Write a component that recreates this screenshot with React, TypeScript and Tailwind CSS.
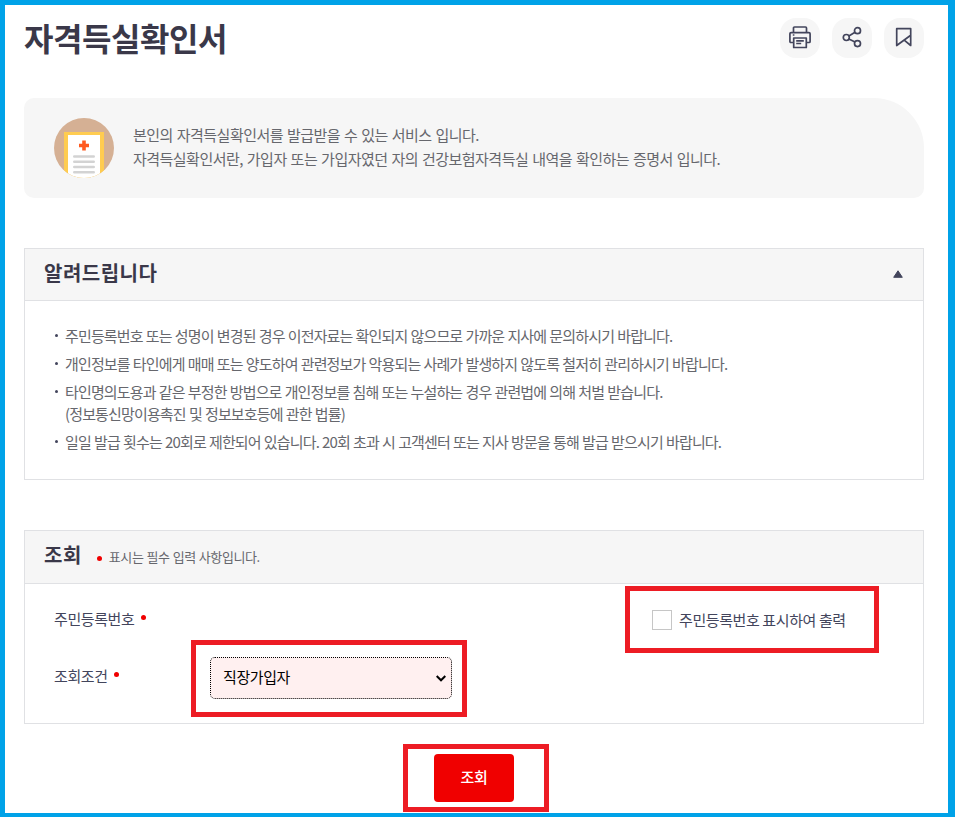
import type { ReactNode } from "react";

const notices = [
  "주민등록번호 또는 성명이 변경된 경우 이전자료는 확인되지 않으므로 가까운 지사에 문의하시기 바랍니다.",
  "개인정보를 타인에게 매매 또는 양도하여 관련정보가 악용되는 사례가 발생하지 않도록 철저히 관리하시기 바랍니다.",
  "타인명의도용과 같은 부정한 방법으로 개인정보를 침해 또는 누설하는 경우 관련법에 의해 처벌 받습니다.\n(정보통신망이용촉진 및 정보보호등에 관한 법률)",
  "일일 발급 횟수는 20회로 제한되어 있습니다. 20회 초과 시 고객센터 또는 지사 방문을 통해 발급 받으시기 바랍니다.",
];

const IconButton = ({ label, children }: { label: string; children: ReactNode }) => (
  <button
    aria-label={label}
    className="flex size-10 items-start justify-center rounded-[16px] bg-[#f6f6f6] pt-[7px]"
  >
    <svg
      width="24"
      height="24"
      viewBox="0 0 24 24"
      fill="none"
      stroke="#43455c"
      strokeWidth="1.7"
      strokeLinejoin="round"
    >
      {children}
    </svg>
  </button>
);

const Required = () => <span className="mb-1 size-[5px] rounded-full bg-[#f00000]" />;

const DocumentIcon = () => (
  <svg width="60" height="60" viewBox="0 0 60 60">
    <clipPath id="circle">
      <circle cx="30" cy="30" r="30" />
    </clipPath>
    <g clipPath="url(#circle)">
      <rect width="60" height="60" fill="#d5b094" />
      <rect x="10" y="14" width="40" height="46" fill="#ffcc50" />
      <rect x="14" y="17" width="32" height="43" fill="#fff" />
      <path d="M30 22.5v10M25 27.5h10" stroke="#ff5a1f" strokeWidth="3.6" />
      <path
        d="M20.3 38.5h19.4M20.3 43.7h19.4M20.3 49h19.4M20.3 54.2h19.4"
        stroke="#d3d3d3"
        strokeWidth="2.6"
        strokeLinecap="round"
      />
    </g>
  </svg>
);

const App = () => {
  return (
    <div className="h-[817px] w-[955px] overflow-hidden border-t-[5px] border-r-[7px] border-b-4 border-l-[5px] border-[#00a2e8] bg-white pr-6 pl-[19px] font-['Noto_Sans_CJK_KR','Noto_Sans',sans-serif] text-[#43455c]">
      <header className="flex h-[93px] items-start justify-between pt-[13px]">
        <h1 className="text-[32px] leading-[38px] font-bold tracking-[-0.45px] text-[#3a3849]">
          자격득실확인서
        </h1>
        <div className="flex gap-3">
          <IconButton label="인쇄">
            <path d="M5.500 7.400V3q0-1 1-1h11q1 0 1 1v4.400M5.500 17.500H2.900q-1 0-1-1V8.800q0-1.200 1.200-1.200h17.800q1.200 0 1.200 1.200v7.700q0 1-1 1H18.500M5.700 13h12.600v9.500H5.700zM4.800 10h1.600M8.200 15.800h7.600M8.200 18.500h5" />
          </IconButton>
          <IconButton label="공유">
            <circle cx="6.300" cy="12.500" r="3" />
            <circle cx="17.500" cy="5.700" r="3" />
            <circle cx="17.500" cy="18.600" r="3" />
            <path d="m8.900 10.900 6.100-3.600M8.900 14.100l6.100 3" />
          </IconButton>
          <IconButton label="북마크">
            <path d="M18.700 10.300 4.700 20.500V3.700h14v16.800L12.200 15.200" />
          </IconButton>
        </div>
      </header>

      <section className="flex h-[100px] items-center gap-[19px] rounded-[10px] rounded-tr-[50px] bg-[#f6f6f6] pl-[30px]">
        <DocumentIcon />
        <p className="pb-0.5 text-[15px] leading-6 tracking-[-0.52px] whitespace-nowrap text-[#66676d] [word-spacing:1.1px]">
          본인의 자격득실확인서를 발급받을 수 있는 서비스 입니다.
          <br />
          자격득실확인서란, 가입자 또는 가입자였던 자의 건강보험자격득실 내역을 확인하는 증명서 입니다.
        </p>
      </section>

      <section className="mt-[50px] h-[232px] border border-[#e0e1e4]">
        <div className="flex h-[52px] items-center justify-between border-b border-[#e0e1e4] bg-[#f6f6f6] pr-5 pb-[3px] pl-[19px]">
          <h2 className="text-[20px] font-bold tracking-[0.5px] text-[#3a3849]">알려드립니다</h2>
          <svg width="10" height="8" viewBox="0 0 10 8" className="mt-0.5">
            <path d="M5 .8 9.300 7.300H.7z" fill="#43455c" stroke="#43455c" strokeLinejoin="round" />
          </svg>
        </div>
        <ul className="flex flex-col gap-1.5 pt-6 pl-[30px] text-[15px] leading-[22px] tracking-[-0.85px] whitespace-pre text-[#66676d] [word-spacing:0.6px]">
          {notices.map((notice) => (
            <li key={notice} className="flex gap-[7px]">
              <span className="mt-[9px] size-[3px] shrink-0 rounded-full bg-[#43455c]" />
              {notice}
            </li>
          ))}
        </ul>
      </section>

      <section className="mt-[50px] h-[194px] border border-[#e0e1e4]">
        <div className="flex h-[53px] items-center border-b border-[#e0e1e4] bg-[#f6f6f6] pb-1 pl-[19px]">
          <h2 className="mr-[15px] text-[20px] font-bold tracking-[0.5px] text-[#3a3849]">조회</h2>
          <span className="flex items-center gap-[7px] pt-1">
            <span className="mt-0.5 size-[5px] rounded-full bg-[#f00000]" />
            <span className="text-[13px] leading-5 tracking-[-0.4px] text-[#66676d] [word-spacing:0.5px]">
              표시는 필수 입력 사항입니다.
            </span>
          </span>
        </div>
        <div className="flex h-[72px] items-center text-[15px] tracking-[-0.4px]">
          <div className="flex w-[597px] items-center gap-[7px] pb-0.5 pl-[29px]">
            주민등록번호 <Required />
          </div>
          <div className="relative flex h-[67px] w-[254px] items-center pl-[30px]">
            <span className="absolute -top-px left-[3px] h-[67px] w-[254px] border-[5px] border-[#ed1c24]" />
            <label className="flex items-center gap-[7px]">
              <input
                type="checkbox"
                className="size-5 appearance-none border border-[#c6c6c6] bg-white"
              />
              주민등록번호 표시하여 출력
            </label>
          </div>
        </div>
        <div className="mt-px flex h-[42px] items-center text-[15px] tracking-[-0.4px]">
          <div className="flex w-[185px] items-center gap-[6px] pb-1 pl-[29px]">
            조회조건 <Required />
          </div>
          <div className="relative h-[42px] w-[242px]">
            <span className="absolute -top-[17px] -left-[19px] h-[77px] w-[276px] border-[5px] border-[#ed1c24]" />
            <button className="flex size-full items-center justify-between rounded-[5px] border border-dotted border-black bg-[#fff0f0] pr-[5px] pb-0.5 pl-3 text-black">
              직장가입자
              <svg width="10" height="7" viewBox="0 0 10 7" className="mt-0.5" fill="none" stroke="#000" strokeWidth="2">
                <path d="m.7 1 4.300 4.300L9.300 1" />
              </svg>
            </button>
          </div>
        </div>
      </section>

      <div className="mt-[30px] flex justify-center">
        <div className="relative">
          <span className="absolute -top-2.5 -left-[31px] h-[68px] w-[146px] border-[5px] border-[#ed1c24]" />
          <button className="h-12 w-20 rounded bg-[#f00000] pb-0.5 text-[15px] font-medium tracking-[-0.4px] text-white">
            조회
          </button>
        </div>
      </div>
    </div>
  );
};

export default App;
